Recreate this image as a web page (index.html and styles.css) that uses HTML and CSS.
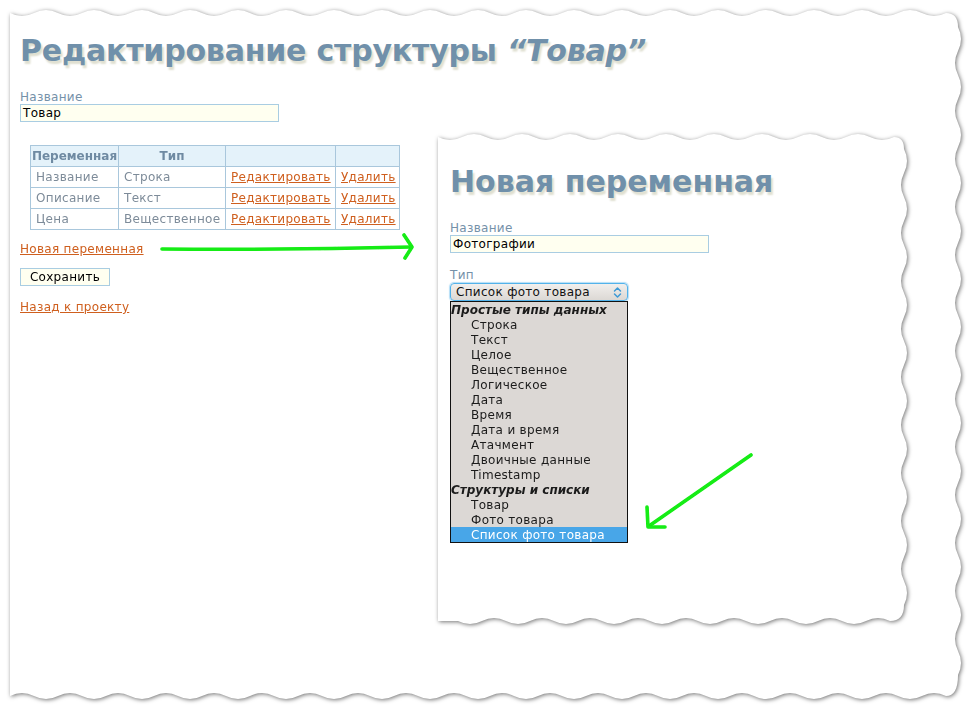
FILE: index.html
```html
<!DOCTYPE html>
<html lang="ru">
<head>
<meta charset="utf-8">
<title>Редактирование структуры</title>
<link rel="stylesheet" href="styles.css">
</head>
<body>
<div class="sheet">
  <div class="paper">
    <h1 class="title main-title">Редактирование структуры <span class="quoted">“Товар”</span></h1>
    <div class="lbl">Название</div>
    <div class="input">Товар</div>
    <div class="row">
      <div class="left">
        <table class="vars">
          <colgroup><col class="c1"><col class="c2"><col class="c3"><col class="c4"></colgroup>
          <thead>
            <tr><th>Переменная</th><th>Тип</th><th></th><th></th></tr>
          </thead>
          <tbody>
            <tr><td>Название</td><td>Строка</td><td><a class="link">Редактировать</a></td><td><a class="link">Удалить</a></td></tr>
            <tr><td>Описание</td><td>Текст</td><td><a class="link">Редактировать</a></td><td><a class="link">Удалить</a></td></tr>
            <tr><td>Цена</td><td>Вещественное</td><td><a class="link">Редактировать</a></td><td><a class="link">Удалить</a></td></tr>
          </tbody>
        </table>
        <a class="link new-var">Новая переменная</a>
        <button class="btn">Сохранить</button>
        <a class="link back">Назад к проекту</a>
      </div>
      <div class="panel-wrap">
        <div class="panel">
          <h2 class="title">Новая переменная</h2>
          <div class="lbl">Название</div>
          <div class="input">Фотографии</div>
          <div class="lbl lbl-type">Тип</div>
          <div class="select">
            <span>Список фото товара</span>
            <svg class="chev" width="9" height="13" viewBox="0 0 9 13"><path d="M1.5 5 L4.5 2 L7.5 5 M1.5 8 L4.5 11 L7.5 8" fill="none" stroke="#3d9ad6" stroke-width="1.5" stroke-linecap="round" stroke-linejoin="round"/></svg>
          </div>
          <ul class="options">
            <li class="grp">Простые типы данных</li>
            <li>Строка</li>
            <li>Текст</li>
            <li>Целое</li>
            <li>Вещественное</li>
            <li>Логическое</li>
            <li>Дата</li>
            <li>Время</li>
            <li>Дата и время</li>
            <li>Атачмент</li>
            <li>Двоичные данные</li>
            <li>Timestamp</li>
            <li class="grp">Структуры и списки</li>
            <li>Товар</li>
            <li>Фото товара</li>
            <li class="sel">Список фото товара</li>
          </ul>
        </div>
      </div>
    </div>
    <svg class="arrows" width="971" height="709" viewBox="0 0 971 709">
      <defs>
        <filter id="soft" x="-5%" y="-5%" width="110%" height="110%"><feGaussianBlur stdDeviation="0.6"/></filter>
      </defs>
      <g fill="none" stroke="#12ec12" stroke-width="3.6" stroke-linecap="round" stroke-linejoin="round" filter="url(#soft)">
        <path d="M162 249 Q290 250 411 247"/>
        <path d="M404 235 L412 247 L405 258"/>
        <path d="M751 455 L649 526"/>
        <path d="M647 507 L648 527 L665 527"/>
      </g>
    </svg>
  </div>
</div>
</body>
</html>
```

FILE: styles.css
```css
* { box-sizing: border-box; }

html, body {
  margin: 0;
  padding: 0;
  background: #ffffff;
}

body {
  font-family: "DejaVu Sans", Verdana, sans-serif;
  font-size: 12px;
  letter-spacing: 0.3px;
  width: 971px;
  height: 709px;
  overflow: hidden;
}

.sheet {
  width: 971px;
  height: 709px;
  filter: drop-shadow(1px 1px 2px rgba(0, 0, 0, 0.55));
}

.paper {
  position: relative;
  width: 971px;
  height: 709px;
  background: #ffffff;
  padding: 32px 0 0 20px;
  clip-path: path("M10 13 Q22 19 34 13 T58 13 T82 13 T106 13 T130 13 T154 13 T178 13 T202 13 T226 13 T250 13 T274 13 T298 13 T322 13 T346 13 T370 13 T394 13 T418 13 T442 13 T466 13 T490 13 T514 13 T538 13 T562 13 T586 13 T610 13 T634 13 T658 13 T682 13 T706 13 T730 13 T754 13 T778 13 T802 13 T826 13 T850 13 T874 13 T898 13 T922 13 T946 13 Q958 13 958 27 Q964 39 958 51 T958 75 T958 99 T958 123 T958 147 T958 171 T958 195 T958 219 T958 243 T958 267 T958 291 T958 315 T958 339 T958 363 T958 387 T958 411 T958 435 T958 459 T958 483 T958 507 T958 531 T958 555 T958 579 T958 603 T958 627 T958 651 T958 675 Q958 696 946 696 Q934 690 922 696 T898 696 T874 696 T850 696 T826 696 T802 696 T778 696 T754 696 T730 696 T706 696 T682 696 T658 696 T634 696 T610 696 T586 696 T562 696 T538 696 T514 696 T490 696 T466 696 T442 696 T418 696 T394 696 T370 696 T346 696 T322 696 T298 696 T274 696 T250 696 T226 696 T202 696 T178 696 T154 696 T130 696 T106 696 T82 696 T58 696 T34 696 T10 696 Z");
}

.title {
  margin: 0;
  font-size: 30px;
  line-height: 38px;
  font-weight: bold;
  letter-spacing: 0;
  color: #7090aa;
  text-shadow: 2px 3px 2px #dfdfd0;
  white-space: nowrap;
}

.main-title {
  letter-spacing: -0.2px;
}

.quoted {
  font-style: italic;
}

.lbl {
  margin-top: 20px;
  line-height: 14px;
  font-size: 12px;
  color: #7591a9;
}

.input {
  width: 259px;
  height: 18px;
  border: 1px solid #a9cde2;
  background: #fffff0;
  color: #000;
  font-size: 12px;
  line-height: 16px;
  padding: 0 2px;
}

.row {
  display: flex;
  align-items: flex-start;
  margin-top: 6px;
}

.left {
  width: 418px;
  flex: none;
  display: flex;
  flex-direction: column;
  align-items: flex-start;
  padding-top: 17px;
}

.vars {
  margin-left: 10px;
  border-collapse: collapse;
  table-layout: fixed;
  width: 369px;
  font-size: 12px;
  color: #7d8b99;
}

.vars col.c1 { width: 88px; }
.vars col.c2 { width: 107px; }
.vars col.c3 { width: 110px; }
.vars col.c4 { width: 64px; }

.vars th,
.vars td {
  border: 1px solid #a9c7dc;
  height: 21px;
  line-height: 20px;
  padding: 0 5px;
  white-space: nowrap;
  overflow: hidden;
}

.vars th {
  background: #e4f2fa;
  color: #6f8aa2;
  font-weight: bold;
  letter-spacing: 0;
  text-align: center;
  padding: 0;
}

.vars td {
  text-align: left;
}

.link {
  color: #cf5f1e;
  text-decoration: underline;
  font-size: 12px;
  line-height: 14px;
}

.new-var {
  margin-top: 12px;
}

.btn {
  margin-top: 12px;
  width: 90px;
  height: 18px;
  padding: 0;
  border: 1px solid #a9cde2;
  background: #fffff0;
  color: #000;
  font-family: "DejaVu Sans", Verdana, sans-serif;
  font-size: 12px;
  letter-spacing: 0.3px;
  line-height: 16px;
}

.back {
  margin-top: 14px;
}

.panel-wrap {
  flex: none;
  filter: drop-shadow(1px 1px 2px rgba(0, 0, 0, 0.55));
}

.panel {
  width: 474px;
  height: 500px;
  background: #ffffff;
  padding: 35px 0 0 12px;
  clip-path: path("M0 9 Q12 15 24 9 T48 9 T72 9 T96 9 T120 9 T144 9 T168 9 T192 9 T216 9 T240 9 T264 9 T288 9 T312 9 T336 9 T360 9 T384 9 T408 9 T432 9 T456 9 Q466 9 466 21 Q472 33 466 45 T466 69 T466 93 T466 117 T466 141 T466 165 T466 189 T466 213 T466 237 T466 261 T466 285 T466 309 T466 333 T466 357 T466 381 T466 405 T466 429 T466 453 T466 477 Q466 493 452 493 Q440 487 428 493 T404 493 T380 493 T356 493 T332 493 T308 493 T284 493 T260 493 T236 493 T212 493 T188 493 T164 493 T140 493 T116 493 T92 493 T68 493 T44 493 T20 493 L0 493 Z");
}

.lbl-type {
  margin-top: 15px;
}

.select {
  margin-top: 1px;
  width: 178px;
  height: 18px;
  border: 1px solid #52b2ea;
  border-radius: 4px;
  box-shadow: 0 0 1px 1px rgba(90, 180, 235, 0.45);
  background: linear-gradient(#f1efed, #dcd8d4);
  display: flex;
  align-items: center;
  justify-content: space-between;
  padding: 0 5px 0 5px;
  font-size: 12px;
  line-height: 16px;
  color: #111;
}

.chev {
  display: block;
}

.options {
  list-style: none;
  margin: 0;
  padding: 0;
  width: 178px;
  border: 1px solid #111;
  background: #dcd8d5;
  font-size: 12px;
  color: #1b1b1b;
}

.options li {
  line-height: 17px;
  height: 15px;
  overflow: hidden;
  padding-left: 20px;
  white-space: nowrap;
}

.options li.grp {
  padding-left: 0;
  font-weight: bold;
  font-style: italic;
  letter-spacing: 0;
}

.options li.sel {
  background: #48a6e8;
  color: #ffffff;
}

.arrows {
  position: absolute;
  left: 0;
  top: 0;
  pointer-events: none;
}
```
